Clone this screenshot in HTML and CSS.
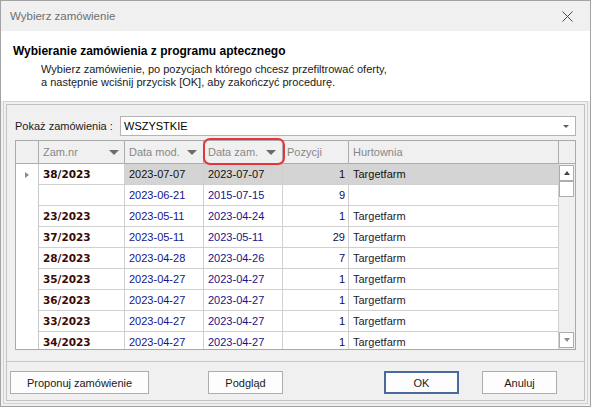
FILE: index.html
```html
<!DOCTYPE html>
<html>
<head>
<meta charset="utf-8">
<link rel="stylesheet" href="styles.css">
</head>
<body>
<div class="window">
  <div class="titlebar">
    <span class="title">Wybierz zamówienie</span>
    <svg class="close" width="11" height="11" viewBox="0 0 11 11"><path d="M0.5 0.5 L10.5 10.5 M10.5 0.5 L0.5 10.5" stroke="#4a4a4a" stroke-width="1" fill="none"/></svg>
  </div>
  <div class="intro">
    <div class="intro-title">Wybieranie zamówienia z programu aptecznego</div>
    <div class="intro-text">Wybierz zamówienie, po pozycjach którego chcesz przefiltrować oferty,<br>a następnie wciśnij przycisk [OK], aby zakończyć procedurę.</div>
  </div>
  <div class="body">
    <div class="frame-outer">
      <div class="frame-inner">
        <div class="content">
          <div class="filter-row">
            <span class="filter-label">Pokaż zamówienia :</span>
            <div class="combo"><span>WSZYSTKIE</span><span class="combo-arrow"></span></div>
          </div>
          <div class="grid">
            <div class="grid-head">
              <div class="hc c-ind"></div>
              <div class="hc c-zam"><span>Zam.nr</span><span class="sort"></span></div>
              <div class="hc c-dmod"><span>Data mod.</span><span class="sort"></span></div>
              <div class="hc c-dzam"><span>Data zam.</span><span class="sort"></span></div>
              <div class="hc c-poz"><span>Pozycji</span></div>
              <div class="hc c-hurt"><span>Hurtownia</span></div>
              <div class="hc c-sb"></div>
            </div>
            <div class="grid-body">
              <div class="rows">
                <div class="row selected">
                  <div class="cell c-ind"><span class="indicator"></span></div>
                  <div class="cell c-zam nr focused">38/2023</div>
                  <div class="cell c-dmod">2023-07-07</div>
                  <div class="cell c-dzam">2023-07-07</div>
                  <div class="cell c-poz">1</div>
                  <div class="cell c-hurt">Targetfarm</div>
                </div>
                <div class="row">
                  <div class="cell c-ind"></div>
                  <div class="cell c-zam nr"></div>
                  <div class="cell c-dmod date">2023-06-21</div>
                  <div class="cell c-dzam date">2015-07-15</div>
                  <div class="cell c-poz num">9</div>
                  <div class="cell c-hurt"></div>
                </div>
                <div class="row">
                  <div class="cell c-ind"></div>
                  <div class="cell c-zam nr">23/2023</div>
                  <div class="cell c-dmod date">2023-05-11</div>
                  <div class="cell c-dzam date">2023-04-24</div>
                  <div class="cell c-poz num">1</div>
                  <div class="cell c-hurt name">Targetfarm</div>
                </div>
                <div class="row">
                  <div class="cell c-ind"></div>
                  <div class="cell c-zam nr">37/2023</div>
                  <div class="cell c-dmod date">2023-05-11</div>
                  <div class="cell c-dzam date">2023-05-11</div>
                  <div class="cell c-poz num">29</div>
                  <div class="cell c-hurt name">Targetfarm</div>
                </div>
                <div class="row">
                  <div class="cell c-ind"></div>
                  <div class="cell c-zam nr">28/2023</div>
                  <div class="cell c-dmod date">2023-04-28</div>
                  <div class="cell c-dzam date">2023-04-26</div>
                  <div class="cell c-poz num">7</div>
                  <div class="cell c-hurt name">Targetfarm</div>
                </div>
                <div class="row">
                  <div class="cell c-ind"></div>
                  <div class="cell c-zam nr">35/2023</div>
                  <div class="cell c-dmod date">2023-04-27</div>
                  <div class="cell c-dzam date">2023-04-27</div>
                  <div class="cell c-poz num">1</div>
                  <div class="cell c-hurt name">Targetfarm</div>
                </div>
                <div class="row">
                  <div class="cell c-ind"></div>
                  <div class="cell c-zam nr">36/2023</div>
                  <div class="cell c-dmod date">2023-04-27</div>
                  <div class="cell c-dzam date">2023-04-27</div>
                  <div class="cell c-poz num">1</div>
                  <div class="cell c-hurt name">Targetfarm</div>
                </div>
                <div class="row">
                  <div class="cell c-ind"></div>
                  <div class="cell c-zam nr">33/2023</div>
                  <div class="cell c-dmod date">2023-04-27</div>
                  <div class="cell c-dzam date">2023-04-27</div>
                  <div class="cell c-poz num">1</div>
                  <div class="cell c-hurt name">Targetfarm</div>
                </div>
                <div class="row">
                  <div class="cell c-ind"></div>
                  <div class="cell c-zam nr">34/2023</div>
                  <div class="cell c-dmod date">2023-04-27</div>
                  <div class="cell c-dzam date">2023-04-27</div>
                  <div class="cell c-poz num">1</div>
                  <div class="cell c-hurt name">Targetfarm</div>
                </div>
              </div>
              <div class="vscroll">
                <div class="sb-top">
                  <div class="sb-btn"><span class="arr-up"></span></div>
                  <div class="sb-btn sb-thumb"></div>
                </div>
                <div class="sb-btn"><span class="arr-down"></span></div>
              </div>
            </div>
            <div class="highlight"></div>
          </div>
        </div>
        <div class="buttons">
          <button class="btn btn-propose">Proponuj zamówienie</button>
          <button class="btn btn-preview">Podgląd</button>
          <button class="btn btn-ok">OK</button>
          <button class="btn btn-cancel">Anuluj</button>
        </div>
      </div>
    </div>
  </div>
</div>
</body>
</html>
```

FILE: styles.css
```css
* { box-sizing: border-box; }
html, body { margin: 0; padding: 0; }
body {
  width: 591px;
  height: 407px;
  overflow: hidden;
  font-family: "Liberation Sans", Arial, sans-serif;
  font-size: 11px;
  color: #1a1a1a;
  background: #ffffff;
}
.window {
  width: 591px;
  height: 407px;
  border: 1px solid #a3a3a3;
  display: flex;
  flex-direction: column;
  background: #f0f0f0;
}
.titlebar {
  height: 30px;
  flex: none;
  background: #f0f0f0;
  display: flex;
  align-items: center;
  justify-content: space-between;
  padding: 0 17px 0 9px;
}
.title {
  font-size: 11.5px;
  color: #6f6f6f;
}
.close { display: block; }
.intro {
  height: 70px;
  flex: none;
  background: #ffffff;
  padding: 13px 0 0 12px;
}
.intro-title {
  font-weight: bold;
  font-size: 12px;
  line-height: 14px;
  color: #000;
}
.intro-text {
  margin: 5px 0 0 28px;
  line-height: 13px;
  color: #1a1a1a;
}
.body {
  flex: 1;
  padding: 0 2px 2px 2px;
}
.frame-outer {
  height: 100%;
  border: 1px solid #d2d2d2;
  padding: 2px;
}
.frame-inner {
  height: 100%;
  border: 1px solid #c2c2c2;
  display: flex;
  flex-direction: column;
}
.content {
  height: 257px;
  flex: none;
  padding: 11px 8px 0 8px;
  border-bottom: 1px solid #c8c8c8;
}
.filter-row {
  display: flex;
  align-items: center;
  height: 20px;
}
.filter-label {
  width: 105px;
  flex: none;
  color: #1a1a1a;
}
.combo {
  flex: 1;
  height: 20px;
  border: 1px solid #b4b4b4;
  background: #fff;
  display: flex;
  align-items: center;
  justify-content: space-between;
  padding: 0 6px 0 3px;
  color: #000;
}
.combo-arrow {
  width: 0;
  height: 0;
  border-left: 3px solid transparent;
  border-right: 3px solid transparent;
  border-top: 3px solid #606060;
}
.grid {
  position: relative;
  margin-top: 4px;
  width: 561px;
  height: 210px;
  border: 1px solid #a9a9a9;
  background: #fff;
  display: flex;
  flex-direction: column;
}
.grid-head {
  display: flex;
  height: 23px;
  flex: none;
  background: #f0f0f0;
  border-bottom: 1px solid #adadad;
}
.hc {
  height: 22px;
  border-right: 1px solid #adadad;
  display: flex;
  align-items: center;
  justify-content: space-between;
  padding: 0 6px 0 4px;
  color: #878787;
}
.c-ind { width: 23px; flex: none; }
.c-zam { width: 86px; flex: none; }
.c-dmod { width: 79px; flex: none; }
.c-dzam { width: 79px; flex: none; }
.c-poz { width: 66px; flex: none; }
.c-hurt { width: 210px; flex: none; }
.c-sb { width: 16px; flex: none; border-right: none; }
.hc.c-zam { padding-right: 5px; }
.sort {
  width: 0;
  height: 0;
  border-left: 5px solid transparent;
  border-right: 5px solid transparent;
  border-top: 5px solid #6c6c6c;
}
.grid-body {
  flex: 1;
  display: flex;
  overflow: hidden;
}
.rows {
  width: 543px;
  flex: none;
}
.row {
  display: flex;
  height: 21px;
}
.cell {
  height: 21px;
  line-height: 20px;
  border-right: 1px solid #d0d0d0;
  border-bottom: 1px solid #d0d0d0;
  padding: 0 4px;
  white-space: nowrap;
  overflow: hidden;
}
.cell.c-ind {
  border-bottom: none;
  border-right-color: #c8c8c8;
  display: flex;
  align-items: center;
  padding-left: 9px;
}
.indicator {
  width: 0;
  height: 0;
  border-top: 3.5px solid transparent;
  border-bottom: 3.5px solid transparent;
  border-left: 4px solid #8a8a8a;
}
.cell.c-poz { text-align: right; padding-right: 3px; }
.nr {
  font-family: "DejaVu Sans", Verdana, sans-serif;
  font-weight: bold;
  font-size: 10.5px;
  color: #3c0a04;
}
.date { color: #15148a; }
.num { color: #0c0c55; }
.name { color: #1c1c30; }
.row.selected .cell { background: #d4d4d4; color: #111; }
.row.selected .cell.c-ind,
.row.selected .cell.focused { background: #ffffff; }
.row.selected .cell.focused { color: #2a0a04; }
.vscroll {
  width: 16px;
  flex: none;
  background: #f0f0f0;
  display: flex;
  flex-direction: column;
  justify-content: space-between;
  padding: 1px 1px 1px 0;
}
.sb-btn {
  width: 15px;
  height: 16px;
  border: 1px solid #adadad;
  background: #fff;
  display: flex;
  align-items: center;
  justify-content: center;
}
.arr-up {
  width: 0;
  height: 0;
  border-left: 3.5px solid transparent;
  border-right: 3.5px solid transparent;
  border-bottom: 4px solid #444;
}
.arr-down {
  width: 0;
  height: 0;
  border-left: 3.5px solid transparent;
  border-right: 3.5px solid transparent;
  border-top: 4px solid #8a8a8a;
}
.highlight {
  position: absolute;
  left: 187px;
  top: -3px;
  width: 82px;
  height: 27px;
  border: 2px solid #e2363d;
  border-radius: 7px;
  pointer-events: none;
}
.buttons {
  flex: 1;
  display: flex;
  align-items: flex-start;
  padding-top: 9px;
}
.btn {
  height: 23px;
  font-family: "Liberation Sans", Arial, sans-serif;
  font-size: 11px;
  color: #1a1a1a;
  background: #fdfdfd;
  border: 1px solid #adadad;
  padding: 0;
  margin: 0;
}
.btn-propose { width: 139px; margin-left: 3px; }
.btn-preview { width: 75px; margin-left: 59px; }
.btn-ok { width: 75px; margin-left: 101px; border: 2px solid #4a6a9e; }
.btn-cancel { width: 75px; margin-left: 23px; }
```
